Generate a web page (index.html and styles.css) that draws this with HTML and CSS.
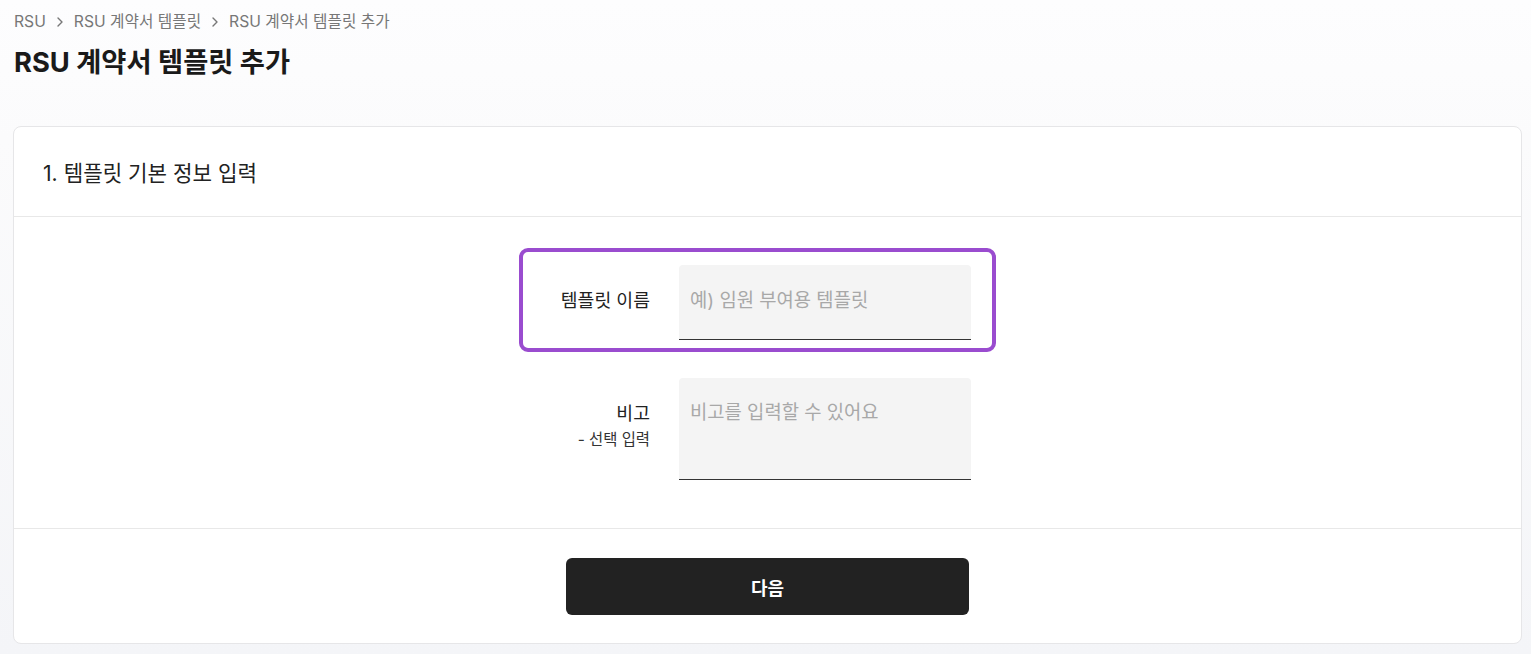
FILE: index.html
```html
<!DOCTYPE html>
<html lang="ko">
<head>
<meta charset="utf-8">
<title>RSU 계약서 템플릿 추가</title>
<link rel="stylesheet" href="styles.css">
</head>
<body>
<div class="page">
  <nav class="breadcrumb">
    <span>RSU</span>
    <svg class="chev" width="8" height="12" viewBox="0 0 8 12"><path d="M2 2l4 4-4 4" fill="none" stroke="#777" stroke-width="1.4" stroke-linecap="round" stroke-linejoin="round"/></svg>
    <span>RSU 계약서 템플릿</span>
    <svg class="chev" width="8" height="12" viewBox="0 0 8 12"><path d="M2 2l4 4-4 4" fill="none" stroke="#777" stroke-width="1.4" stroke-linecap="round" stroke-linejoin="round"/></svg>
    <span>RSU 계약서 템플릿 추가</span>
  </nav>
  <h1 class="title">RSU 계약서 템플릿 추가</h1>

  <section class="card">
    <div class="card-head">1. 템플릿 기본 정보 입력</div>
    <div class="card-body">
      <div class="form">
        <div class="row row-focus">
          <div class="label"><div class="label-main">템플릿 이름</div></div>
          <input class="control" type="text" placeholder="예) 임원 부여용 템플릿">
        </div>
        <div class="row">
          <div class="label">
            <div class="label-main">비고</div>
            <div class="label-sub">- 선택 입력</div>
          </div>
          <textarea class="control area" placeholder="비고를 입력할 수 있어요"></textarea>
        </div>
      </div>
    </div>
    <div class="card-foot">
      <button class="btn" type="button">다음</button>
    </div>
  </section>
</div>
</body>
</html>
```

FILE: styles.css
```css
* { box-sizing: border-box; }
html, body { margin: 0; padding: 0; }
body {
  min-height: 654px;
  background: linear-gradient(#fdfdfe 0, #fbfbfc 140px, #f4f5f8 654px);
  font-family: "Inter", "Noto Sans CJK KR", sans-serif;
  color: #222;
}
.page {
  padding: 12px 9px 10px 13px;
}
.breadcrumb {
  display: flex;
  align-items: center;
  gap: 9px;
  padding-left: 1px;
  font-size: 15.7px;
  line-height: 20px;
  color: #777;
}
.chev { display: block; margin: 0 1px; }
.title {
  margin: 13px 0 0 1px;
  font-size: 27.3px;
  line-height: 36px;
  font-weight: 700;
  color: #1a1a1a;
}
.card {
  margin-top: 45px;
  background: #fff;
  border: 1px solid #e6e6e8;
  border-radius: 8px;
}
.card-head {
  height: 90px;
  display: flex;
  align-items: center;
  padding-left: 29px;
  font-size: 21.2px;
  color: #222;
  border-bottom: 1px solid #e8e8e8;
}
.card-body {
  padding: 31px 0 36px;
}
.form {
  width: 497px;
  margin: 0 auto;
  display: flex;
  flex-direction: column;
  gap: 9px;
}
.row {
  width: 477px;
  display: flex;
  gap: 29px;
  padding: 13px 21px 8px 20px;
  border: 4px solid transparent;
  border-radius: 9px;
}
.row-focus {
  border-color: #9a4ccf;
}
.label {
  width: 107px;
  flex: none;
  padding-top: 23px;
  text-align: right;
  color: #222;
}
.label-main {
  font-size: 18.3px;
  line-height: 24px;
  font-weight: 400;
  white-space: nowrap;
}
.label-sub {
  margin-top: 5px;
  font-size: 15.4px;
  line-height: 20px;
  color: #333;
  white-space: nowrap;
}
.control {
  display: block;
  width: 292px;
  height: 75px;
  margin: 0;
  padding: 23px 11px 26px;
  border: none;
  border-bottom: 1px solid #333;
  border-radius: 4px 4px 0 0;
  background: #f4f4f4;
  font-family: "Inter", "Noto Sans CJK KR", sans-serif;
  font-size: 18.8px;
  line-height: 24px;
  color: #222;
  outline: none;
  resize: none;
}
.control::placeholder { color: #a8a8a8; }
.area { height: 102px; }
.card-foot {
  border-top: 1px solid #e8e8e8;
  padding: 29px 0 28px;
  display: flex;
  justify-content: center;
}
.btn {
  width: 403px;
  height: 57px;
  border: none;
  border-radius: 6px;
  background: #222;
  color: #fff;
  font-family: "Inter", "Noto Sans CJK KR", sans-serif;
  font-size: 18px;
  font-weight: 700;
  cursor: pointer;
}
```
